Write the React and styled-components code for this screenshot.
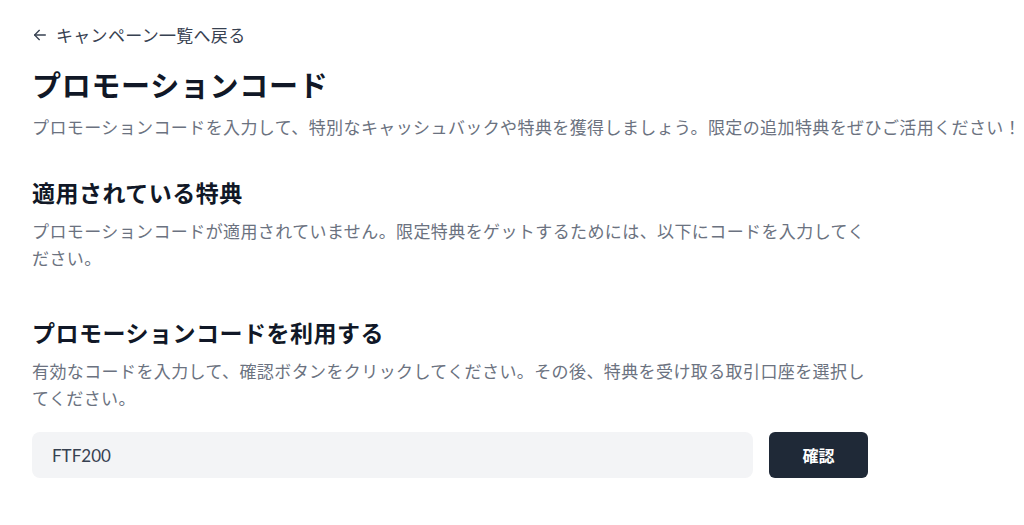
import React from "react";
import styled, { createGlobalStyle } from "styled-components";

const Global = createGlobalStyle`
  html, body { margin: 0; padding: 0; background: #ffffff; }
  body { font-family: "Noto Sans CJK JP", "Noto Sans", sans-serif; }
  * { box-sizing: border-box; }
`;

const Page = styled.div`
  padding: 24px 0 0 32px;
  width: 1024px;
  height: 525px;
  overflow: hidden;
`;

const Back = styled.a`
  display: flex;
  align-items: center;
  gap: 8px;
  color: #374151;
  font-size: 17px;
  letter-spacing: 0.3px;
  line-height: 22px;
  text-decoration: none;
  cursor: pointer;
`;

const Title = styled.h1`
  margin: 18px 0 0;
  font-size: 29px;
  letter-spacing: 0.7px;
  line-height: 40px;
  font-weight: 700;
  color: #111827;
`;

const Lead = styled.p`
  margin: 9px 0 0;
  font-size: 17px;
  letter-spacing: 0.4px;
  line-height: 27px;
  color: #6b7280;
  white-space: nowrap;
`;

const Content = styled.div`
  width: 836px;
`;

const Section = styled.section`
  margin-top: ${(p) => p.$top}px;
`;

const Heading = styled.h2`
  margin: 0;
  font-size: 23px;
  letter-spacing: 0.5px;
  line-height: 32px;
  font-weight: 700;
  color: #111827;
`;

const Text = styled.p`
  margin: 9px 0 0;
  font-size: 17px;
  letter-spacing: 0.4px;
  line-height: 27px;
  color: #6b7280;
`;

const Form = styled.div`
  display: flex;
  gap: 16px;
  margin-top: 21px;
`;

const Input = styled.input`
  flex: 1;
  height: 46px;
  border: none;
  outline: none;
  background: #f3f4f6;
  border-radius: 8px;
  padding: 0 20px;
  font-family: Lato, "Noto Sans", sans-serif;
  font-size: 17px;
  color: #374151;
`;

const Button = styled.button`
  width: 99px;
  height: 46px;
  border: none;
  border-radius: 6px;
  background: #1f2937;
  color: #ffffff;
  font-family: "Noto Sans CJK JP", sans-serif;
  font-size: 16px;
  font-weight: 700;
  cursor: pointer;
`;

const ArrowIcon = () => (
  <svg width="16" height="16" viewBox="0 0 24 24" fill="none" stroke="currentColor" strokeWidth="2" strokeLinecap="round" strokeLinejoin="round">
    <path d="M20 12H4" />
    <path d="M11 19l-7-7 7-7" />
  </svg>
);

export default function App() {
  return (
    <>
      <Global />
      <Page>
        <Back>
          <ArrowIcon />
          キャンペーン一覧へ戻る
        </Back>
        <Title>プロモーションコード</Title>
        <Lead>プロモーションコードを入力して、特別なキャッシュバックや特典を獲得しましょう。限定の追加特典をぜひご活用ください！</Lead>
        <Content>
          <Section $top={36}>
            <Heading>適用されている特典</Heading>
            <Text>プロモーションコードが適用されていません。限定特典をゲットするためには、以下にコードを入力してください。</Text>
          </Section>
          <Section $top={45}>
            <Heading>プロモーションコードを利用する</Heading>
            <Text>有効なコードを入力して、確認ボタンをクリックしてください。その後、特典を受け取る取引口座を選択してください。</Text>
            <Form>
              <Input defaultValue="FTF200" />
              <Button>確認</Button>
            </Form>
          </Section>
        </Content>
      </Page>
    </>
  );
}
